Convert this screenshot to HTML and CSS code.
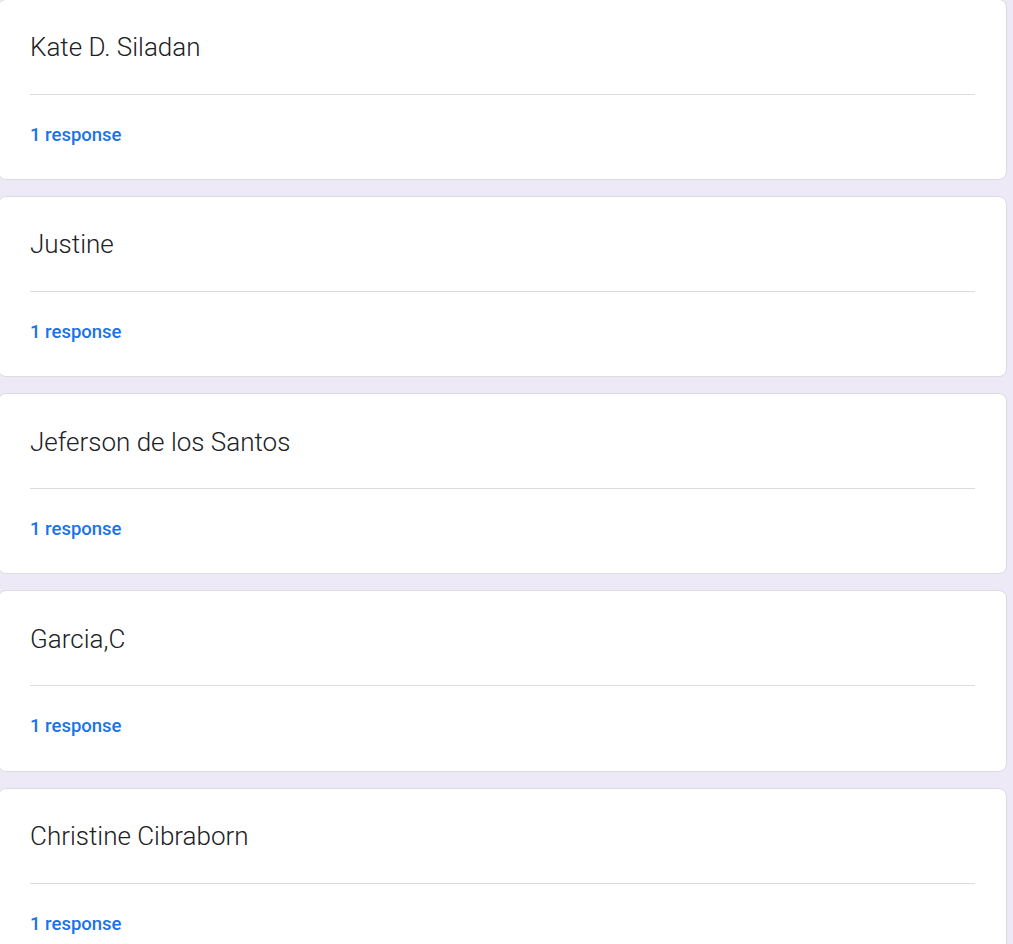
FILE: index.html
```html
<!DOCTYPE html>
<html>
<head>
<meta charset="utf-8">
<link rel="stylesheet" href="styles.css">
</head>
<body>
<main class="list">
  <section class="card">
    <div class="name">Kate D. Siladan</div>
    <div class="footer"><span class="count">1 response</span></div>
  </section>
  <section class="card">
    <div class="name">Justine</div>
    <div class="footer"><span class="count">1 response</span></div>
  </section>
  <section class="card">
    <div class="name">Jeferson de los Santos</div>
    <div class="footer"><span class="count">1 response</span></div>
  </section>
  <section class="card">
    <div class="name">Garcia,C</div>
    <div class="footer"><span class="count">1 response</span></div>
  </section>
  <section class="card">
    <div class="name">Christine Cibraborn</div>
    <div class="footer"><span class="count">1 response</span></div>
  </section>
</main>
</body>
</html>
```
FILE: styles.css
```css
html, body {
  margin: 0;
  padding: 0;
  background: #ede9f7;
  overflow: hidden;
}
.list {
  display: flex;
  flex-direction: column;
  gap: 16px;
  margin: -1.5px 6px 0 -2px;
}
.card {
  background: #fff;
  border: 1px solid #dadce0;
  border-radius: 8px;
  padding: 0 31px;
  height: 181.25px;
  box-sizing: border-box;
  display: flex;
  flex-direction: column;
}
.name {
  height: 95px;
  display: flex;
  align-items: center;
  border-bottom: 1px solid #dadce0;
  font-family: Roboto, "Liberation Sans", sans-serif;
  font-weight: 300;
  font-size: 26px;
  color: #202124;
  box-sizing: border-box;
  padding-top: 1px;
}
.footer {
  padding-top: 30px;
  line-height: 20px;
}
.count {
  font-family: Roboto, "Open Sans", sans-serif;
  font-weight: 500;
  font-size: 18.5px;
  color: #1a73e8;
}
```
